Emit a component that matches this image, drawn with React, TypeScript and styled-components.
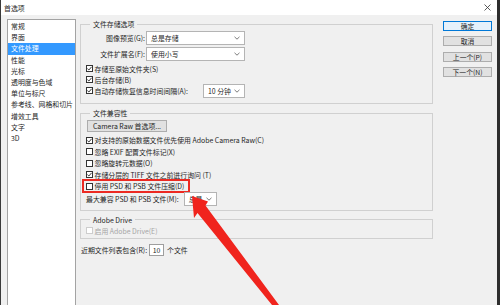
import React from 'react';
import styled, { createGlobalStyle } from 'styled-components';

const GlobalStyle = createGlobalStyle`
  html, body {
    margin: 0;
    padding: 0;
    background: #f0f0f0;
    overflow: hidden;
  }
`;

const Window = styled.div`
  position: relative;
  width: 500px;
  height: 305px;
  box-sizing: border-box;
  background: #f0f0f0;
  border-left: 1px solid #3a3a3a;
  border-right: 3px solid #2d2d2d;
  overflow: hidden;
  display: flex;
  flex-direction: column;
  font-family: "Noto Sans CJK SC", sans-serif;
  font-size: 6.9px;
  color: #262626;
`;

const TitleBar = styled.div`
  height: 15px;
  flex-shrink: 0;
  background: #fff;
  display: flex;
  align-items: center;
  justify-content: space-between;
  padding: 0 6px 0 3px;
`;

const Title = styled.span`
  line-height: 10px;
`;

const Body = styled.div`
  display: flex;
  align-items: flex-start;
  padding: 4px 0 0 6px;
`;

const Sidebar = styled.ul`
  list-style: none;
  margin: 0;
  padding: 1px 0 0;
  width: 69px;
  height: 300px;
  box-sizing: border-box;
  flex-shrink: 0;
  background: #fff;
  border: 1px solid #a3a3a3;
`;

const SidebarItem = styled.li<{ $active?: boolean }>`
  height: 11.2px;
  line-height: 11.2px;
  padding-left: 3px;
  white-space: nowrap;
  background: ${p => (p.$active ? '#3399ff' : 'transparent')};
  color: ${p => (p.$active ? '#fff' : '#262626')};
`;

const Content = styled.div`
  width: 353px;
  margin-left: 4px;
  flex-shrink: 0;
  display: flex;
  flex-direction: column;
`;

const Group = styled.fieldset<{ $mt?: number; $pt?: number; $pb?: number }>`
  margin: ${p => p.$mt ?? 0}px 0 0;
  padding: ${p => p.$pt ?? 2}px 6px ${p => p.$pb ?? 7}px 5px;
  border: 1px solid #d0d0d0;
  min-width: 0;
  display: flex;
  flex-direction: column;
`;

const Legend = styled.legend`
  padding: 0 3px;
  margin-left: 4px;
  line-height: 10px;
`;

const SelectRow = styled.div<{ $mt?: number }>`
  display: flex;
  align-items: center;
  height: 14px;
  margin-top: ${p => p.$mt ?? 0}px;
`;

const RowLabel = styled.span<{ $w?: number }>`
  width: ${p => (p.$w ? `${p.$w}px` : 'auto')};
  text-align: right;
  white-space: nowrap;
  margin-right: 1px;
`;

const SelectBox = styled.div<{ $w: number; $ml?: number }>`
  width: ${p => p.$w}px;
  height: 14px;
  margin-left: ${p => p.$ml ?? 0}px;
  box-sizing: border-box;
  background: #fff;
  border: 1px solid #b4b4b4;
  display: flex;
  align-items: center;
  justify-content: space-between;
  padding: 0 4px 0 4px;
  flex-shrink: 0;
  line-height: 10px;
`;

const CheckRow = styled.div<{ $h?: number; $mt?: number; $disabled?: boolean }>`
  display: flex;
  align-items: center;
  height: ${p => p.$h ?? 11}px;
  margin-top: ${p => p.$mt ?? 0}px;
  white-space: nowrap;
  color: ${p => (p.$disabled ? '#a6a6a6' : '#262626')};
`;

const MarkedRow = styled(CheckRow)`
  width: fit-content;
  height: 14px;
  box-sizing: border-box;
  margin: -1.25px 0 -1.25px -4px;
  padding: 0 4px 0 2px;
  border: 2px solid #ec2a22;
`;

const Box = styled.span<{ $disabled?: boolean }>`
  width: 7px;
  height: 7px;
  box-sizing: border-box;
  flex-shrink: 0;
  border: 1px solid ${p => (p.$disabled ? '#cdcdcd' : '#333')};
  background: #fff;
  display: flex;
  align-items: center;
  justify-content: center;
  margin-right: 1.5px;
`;

const CheckText = styled.span<{ $w?: number }>`
  width: ${p => (p.$w ? `${p.$w}px` : 'auto')};
  line-height: 10px;
`;

const PlainButton = styled.div`
  width: 80px;
  height: 12px;
  margin-left: 1px;
  box-sizing: border-box;
  background: #e1e1e1;
  border: 1px solid #adadad;
  display: flex;
  align-items: center;
  justify-content: center;
  line-height: 10px;
`;

const RecentRow = styled.div`
  display: flex;
  align-items: center;
  height: 12px;
  margin-top: 5px;
  padding-left: 1px;
  white-space: nowrap;
`;

const NumberField = styled.div`
  width: 15px;
  height: 12px;
  box-sizing: border-box;
  margin: 0 3px 0 2px;
  background: #fff;
  border: 1px solid #9e9e9e;
  display: flex;
  align-items: center;
  justify-content: center;
  line-height: 10px;
`;

const ButtonColumn = styled.div`
  width: 49px;
  margin: 2px 0 0 10px;
  flex-shrink: 0;
  display: flex;
  flex-direction: column;
  gap: 5.3px;
`;

const DialogButton = styled.div<{ $primary?: boolean }>`
  height: 10px;
  box-sizing: border-box;
  background: ${p => (p.$primary ? '#e5f1fb' : '#e1e1e1')};
  border: 1px solid ${p => (p.$primary ? '#0078d7' : '#adadad')};
  display: flex;
  align-items: center;
  justify-content: center;
  line-height: 8px;
  font-size: 6.8px;
`;

const ArrowLayer = styled.svg`
  position: absolute;
  left: 0;
  top: 0;
  pointer-events: none;
`;

const Chevron = () => (
  <svg width="6" height="4" viewBox="0 0 6 4">
    <polyline points="0.5,0.8 3,3.2 5.5,0.8" fill="none" stroke="#6d6d6d" strokeWidth="0.9" />
  </svg>
);

const CloseIcon = () => (
  <svg width="7" height="7" viewBox="0 0 7 7">
    <path d="M0.5 0.5 L6.5 6.5 M6.5 0.5 L0.5 6.5" stroke="#333" strokeWidth="0.8" />
  </svg>
);

const Check = ({ checked, disabled }: { checked?: boolean; disabled?: boolean }) => (
  <Box $disabled={disabled}>
    {checked && (
      <svg width="5" height="5" viewBox="0 0 5 5">
        <polyline points="0.4,2.6 1.9,4 4.6,0.8" fill="none" stroke="#222" strokeWidth="0.9" />
      </svg>
    )}
  </Box>
);

const Select = ({ w, ml, children }: { w: number; ml?: number; children: React.ReactNode }) => (
  <SelectBox $w={w} $ml={ml}>
    <span>{children}</span>
    <Chevron />
  </SelectBox>
);

const sidebarItems = [
  '常规',
  '界面',
  '文件处理',
  '性能',
  '光标',
  '透明度与色域',
  '单位与标尺',
  '参考线、网格和切片',
  '增效工具',
  '文字',
  '3D',
];

const compatRows = [
  { text: '对支持的原始数据文件优先使用 Adobe Camera Raw(C)', checked: true },
  { text: '忽略 EXIF 配置文件标记(X)', checked: false },
  { text: '忽略旋转元数据(O)', checked: false },
  { text: '存储分层的 TIFF 文件之前进行询问 (T)', checked: true },
];

const App = () => {
  return (
    <Window>
      <GlobalStyle />
      <TitleBar>
        <Title>首选项</Title>
        <CloseIcon />
      </TitleBar>
      <Body>
        <Sidebar>
          {sidebarItems.map(item => (
            <SidebarItem key={item} $active={item === '文件处理'}>
              {item}
            </SidebarItem>
          ))}
        </Sidebar>

        <Content>
          <Group $pt={2} $pb={7}>
            <Legend>文件存储选项</Legend>
            <SelectRow>
              <RowLabel $w={59}>图像预览(G):</RowLabel>
              <Select w={99}>总是存储</Select>
            </SelectRow>
            <SelectRow $mt={2}>
              <RowLabel $w={59}>文件扩展名(F):</RowLabel>
              <Select w={99}>使用小写</Select>
            </SelectRow>
            <CheckRow $mt={2}>
              <Check checked />
              <CheckText>存储至原始文件夹(S)</CheckText>
            </CheckRow>
            <CheckRow>
              <Check checked />
              <CheckText>后台存储(B)</CheckText>
            </CheckRow>
            <CheckRow>
              <Check checked />
              <CheckText $w={108.5}>自动存储恢复信息时间间隔(A):</CheckText>
              <Select w={42}>10 分钟</Select>
            </CheckRow>
          </Group>

          <Group $mt={4} $pt={2} $pb={4}>
            <Legend>文件兼容性</Legend>
            <PlainButton>Camera Raw 首选项...</PlainButton>
            <CheckRow $h={11.5} $mt={2.25}>
              <Check checked={compatRows[0].checked} />
              <CheckText>{compatRows[0].text}</CheckText>
            </CheckRow>
            {compatRows.slice(1).map(row => (
              <CheckRow key={row.text} $h={11.5}>
                <Check checked={row.checked} />
                <CheckText>{row.text}</CheckText>
              </CheckRow>
            ))}
            <MarkedRow>
              <Check />
              <CheckText>停用 PSD 和 PSB 文件压缩(D)</CheckText>
            </MarkedRow>
            <SelectRow>
              <RowLabel>最大兼容 PSD 和 PSB 文件(M):</RowLabel>
              <Select w={33} ml={4}>总是</Select>
            </SelectRow>
          </Group>

          <Group $mt={4} $pt={0.5} $pb={2}>
            <Legend>Adobe Drive</Legend>
            <CheckRow $disabled>
              <Check disabled />
              <CheckText>启用 Adobe Drive(E)</CheckText>
            </CheckRow>
          </Group>

          <RecentRow>
            <span>近期文件列表包含(R):</span>
            <NumberField>10</NumberField>
            <span>个文件</span>
          </RecentRow>
        </Content>

        <ButtonColumn>
          <DialogButton $primary>确定</DialogButton>
          <DialogButton>取消</DialogButton>
          <DialogButton>上一个(P)</DialogButton>
          <DialogButton>下一个(N)</DialogButton>
        </ButtonColumn>
      </Body>

      <ArrowLayer width="500" height="305" viewBox="0 0 500 305">
        <polygon
          points="191,196 207,201.5 204.5,205.5 278,305 271,305 196.5,213 193,218"
          fill="#f0241d"
        />
      </ArrowLayer>
    </Window>
  );
};

export default App;
